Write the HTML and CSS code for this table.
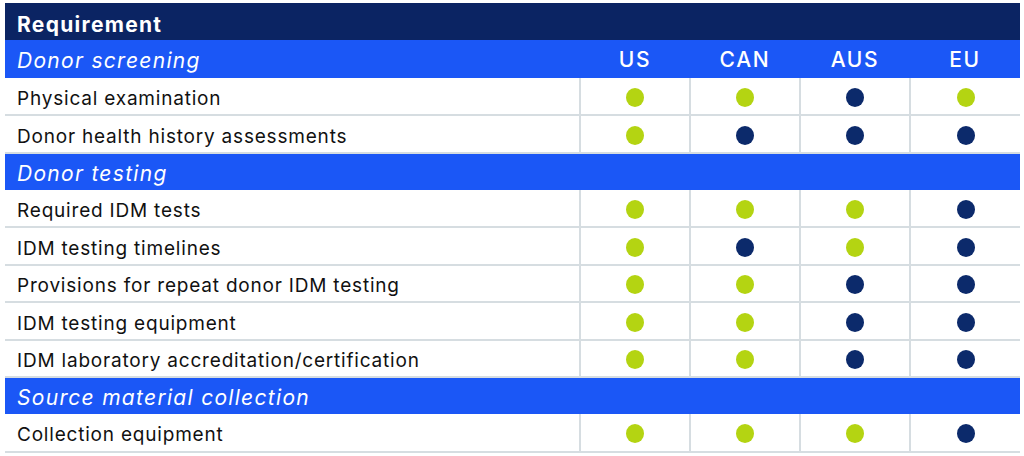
FILE: index.html
```html
<!DOCTYPE html>
<html lang="en">
<head>
<meta charset="utf-8">
<link rel="stylesheet" href="styles.css">
</head>
<body>
<table class="req">
  <colgroup>
    <col class="c-name"><col class="c-val"><col class="c-val"><col class="c-val"><col class="c-val">
  </colgroup>
  <tr class="top"><th colspan="5">Requirement</th></tr>
  <tr class="sec"><td>Donor screening</td><td class="h">US</td><td class="h">CAN</td><td class="h">AUS</td><td class="h">EU</td></tr>
  <tr><td>Physical examination</td><td><span class="dot g"></span></td><td><span class="dot g"></span></td><td><span class="dot n"></span></td><td><span class="dot g"></span></td></tr>
  <tr><td>Donor health history assessments</td><td><span class="dot g"></span></td><td><span class="dot n"></span></td><td><span class="dot n"></span></td><td><span class="dot n"></span></td></tr>
  <tr class="sec"><td colspan="5">Donor testing</td></tr>
  <tr><td>Required IDM tests</td><td><span class="dot g"></span></td><td><span class="dot g"></span></td><td><span class="dot g"></span></td><td><span class="dot n"></span></td></tr>
  <tr><td>IDM testing timelines</td><td><span class="dot g"></span></td><td><span class="dot n"></span></td><td><span class="dot g"></span></td><td><span class="dot n"></span></td></tr>
  <tr><td>Provisions for repeat donor IDM testing</td><td><span class="dot g"></span></td><td><span class="dot g"></span></td><td><span class="dot n"></span></td><td><span class="dot n"></span></td></tr>
  <tr><td>IDM testing equipment</td><td><span class="dot g"></span></td><td><span class="dot g"></span></td><td><span class="dot n"></span></td><td><span class="dot n"></span></td></tr>
  <tr><td>IDM laboratory accreditation/certification</td><td><span class="dot g"></span></td><td><span class="dot g"></span></td><td><span class="dot n"></span></td><td><span class="dot n"></span></td></tr>
  <tr class="sec"><td colspan="5">Source material collection</td></tr>
  <tr><td>Collection equipment</td><td><span class="dot g"></span></td><td><span class="dot g"></span></td><td><span class="dot g"></span></td><td><span class="dot n"></span></td></tr>
</table>
</body>
</html>
```

FILE: styles.css
```css
html, body {
  margin: 0;
  padding: 0;
  background: #ffffff;
}
body {
  padding: 3px 5px 0 5px;
  font-family: Inter, "Open Sans", sans-serif;
  color: #111111;
}
.req {
  border-collapse: collapse;
  width: 1014px;
  table-layout: fixed;
}
.c-name { width: 575px; }
.c-val { width: 110px; }
.req tr { height: 37.4px; }
.req td, .req th {
  padding: 0;
  vertical-align: middle;
}
.req td {
  font-size: 19px;
  letter-spacing: 0.8px;
  border-bottom: 2px solid #d6dde1;
  text-align: center;
}
.req td:first-child {
  text-align: left;
  padding-left: 12px;
  padding-top: 5px;
}
.req td + td {
  border-left: 2px solid #d6dde1;
}
.top th {
  background: #0b2463;
  color: #ffffff;
  text-align: left;
  padding-left: 12px;
  padding-top: 6px;
  font-size: 21px;
  font-weight: 700;
  letter-spacing: 1.3px;
}
.sec td {
  background: #1b57f6;
  color: #ffffff;
  border-bottom: none;
  font-size: 21px;
  font-style: italic;
  letter-spacing: 1.3px;
}
.sec td:first-child { padding-top: 3px; }
.sec td + td { border-left: none; }
.sec td.h {
  font-style: normal;
  font-weight: 500;
  font-size: 21px;
  letter-spacing: 1.7px;
  padding-top: 1px;
}
.dot {
  display: inline-block;
  width: 18px;
  height: 19px;
  border-radius: 50%;
  vertical-align: middle;
}
.dot.g { background: #b4d412; }
.dot.n { background: #0c2a6b; }
```
